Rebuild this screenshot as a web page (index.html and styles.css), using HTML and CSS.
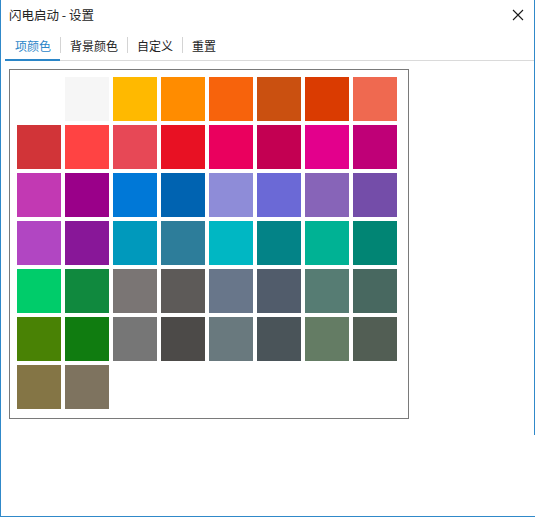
FILE: index.html
```html
<!DOCTYPE html>
<html lang="zh-CN">
<head>
  <meta charset="UTF-8" />
  <meta name="viewport" content="width=device-width, initial-scale=1.0" />
  <title>闪电启动 - 设置</title>
  <link rel="stylesheet" href="styles.css">
</head>
<body>
  <div class="window">
    <div class="titlebar">
      <span class="title">闪电启动 - 设置</span>
      <svg class="close" width="12" height="12" viewBox="0 0 12 12">
        <path d="M1 1 L11 11 M11 1 L1 11" stroke="#1a1a1a" stroke-width="1.1" fill="none" />
      </svg>
    </div>

    <div class="tabs">
      <div class="tab active">项颜色</div>
      <span class="sep"></span>
      <div class="tab">背景颜色</div>
      <span class="sep"></span>
      <div class="tab">自定义</div>
      <span class="sep"></span>
      <div class="tab">重置</div>
    </div>

    <div class="palette">
      <div class="swatch" style="background:#ffffff"></div>
      <div class="swatch" style="background:#f6f6f6"></div>
      <div class="swatch" style="background:#ffb900"></div>
      <div class="swatch" style="background:#ff8c00"></div>
      <div class="swatch" style="background:#f7630c"></div>
      <div class="swatch" style="background:#ca5010"></div>
      <div class="swatch" style="background:#da3b01"></div>
      <div class="swatch" style="background:#ef6950"></div>

      <div class="swatch" style="background:#d13438"></div>
      <div class="swatch" style="background:#ff4343"></div>
      <div class="swatch" style="background:#e74856"></div>
      <div class="swatch" style="background:#e81123"></div>
      <div class="swatch" style="background:#ea005e"></div>
      <div class="swatch" style="background:#c30052"></div>
      <div class="swatch" style="background:#e3008c"></div>
      <div class="swatch" style="background:#bf0077"></div>

      <div class="swatch" style="background:#c239b3"></div>
      <div class="swatch" style="background:#9a0089"></div>
      <div class="swatch" style="background:#0078d7"></div>
      <div class="swatch" style="background:#0063b1"></div>
      <div class="swatch" style="background:#8e8cd8"></div>
      <div class="swatch" style="background:#6b69d6"></div>
      <div class="swatch" style="background:#8764b8"></div>
      <div class="swatch" style="background:#744da9"></div>

      <div class="swatch" style="background:#b146c2"></div>
      <div class="swatch" style="background:#881798"></div>
      <div class="swatch" style="background:#0099bc"></div>
      <div class="swatch" style="background:#2d7d9a"></div>
      <div class="swatch" style="background:#00b7c3"></div>
      <div class="swatch" style="background:#038387"></div>
      <div class="swatch" style="background:#00b294"></div>
      <div class="swatch" style="background:#018574"></div>

      <div class="swatch" style="background:#00cc6a"></div>
      <div class="swatch" style="background:#10893e"></div>
      <div class="swatch" style="background:#7a7574"></div>
      <div class="swatch" style="background:#5d5a58"></div>
      <div class="swatch" style="background:#68768a"></div>
      <div class="swatch" style="background:#515c6b"></div>
      <div class="swatch" style="background:#567c73"></div>
      <div class="swatch" style="background:#486860"></div>

      <div class="swatch" style="background:#498205"></div>
      <div class="swatch" style="background:#107c10"></div>
      <div class="swatch" style="background:#767676"></div>
      <div class="swatch" style="background:#4c4a48"></div>
      <div class="swatch" style="background:#69797e"></div>
      <div class="swatch" style="background:#4a5459"></div>
      <div class="swatch" style="background:#647c64"></div>
      <div class="swatch" style="background:#525e54"></div>

      <div class="swatch" style="background:#847545"></div>
      <div class="swatch" style="background:#7e735f"></div>
    </div>
  </div>
</body>
</html>
```

FILE: styles.css
```css
:root {
  --accent: #2b86c8;
  --frame: #3089c9;
  --text-color: #1a1a1a;
}
* { box-sizing: border-box; }
body {
  margin: 0;
  font-family: "Noto Sans CJK SC", "Noto Sans", sans-serif;
  font-size: 12px;
  color: var(--text-color);
  background: #fff;
}
.window {
  position: relative;
  width: 535px;
  height: 517px;
  background: #fff;
  border-left: 1px solid var(--frame);
  border-bottom: 1px solid var(--frame);
}
/* right frame only runs part of the way down */
.window::after {
  content: "";
  position: absolute;
  top: 0;
  right: 0;
  width: 1px;
  height: 435px;
  background: var(--frame);
}
.titlebar {
  height: 30px;
  display: flex;
  align-items: center;
  justify-content: space-between;
  padding: 0 11px 0 8px;
}
.title {
  font-size: 12.5px;
  line-height: 14px;
  color: #222;
}
.close { display: block; }
.tabs {
  display: flex;
  align-items: center;
  height: 31px;
  margin-left: 4px;
  border-bottom: 1px solid #dadada;
}
.tab {
  height: 30px;
  line-height: 30px;
  padding: 0 9px;
  color: #222;
  border-bottom: 2px solid transparent;
  margin-bottom: -1px;
}
.tab:first-child { padding-left: 10px; }
.tab.active {
  color: var(--accent);
  border-bottom-color: var(--accent);
}
.sep {
  width: 1px;
  height: 16px;
  background: #d4d4d4;
}
.palette {
  width: 400px;
  height: 350px;
  margin: 8px 0 0 8px;
  border: 1px solid #7a7a7a;
  padding: 7px;
  display: grid;
  grid-template-columns: repeat(8, 44px);
  grid-auto-rows: 44px;
  gap: 4px;
  align-content: start;
}
.swatch {
  width: 44px;
  height: 44px;
}
```
